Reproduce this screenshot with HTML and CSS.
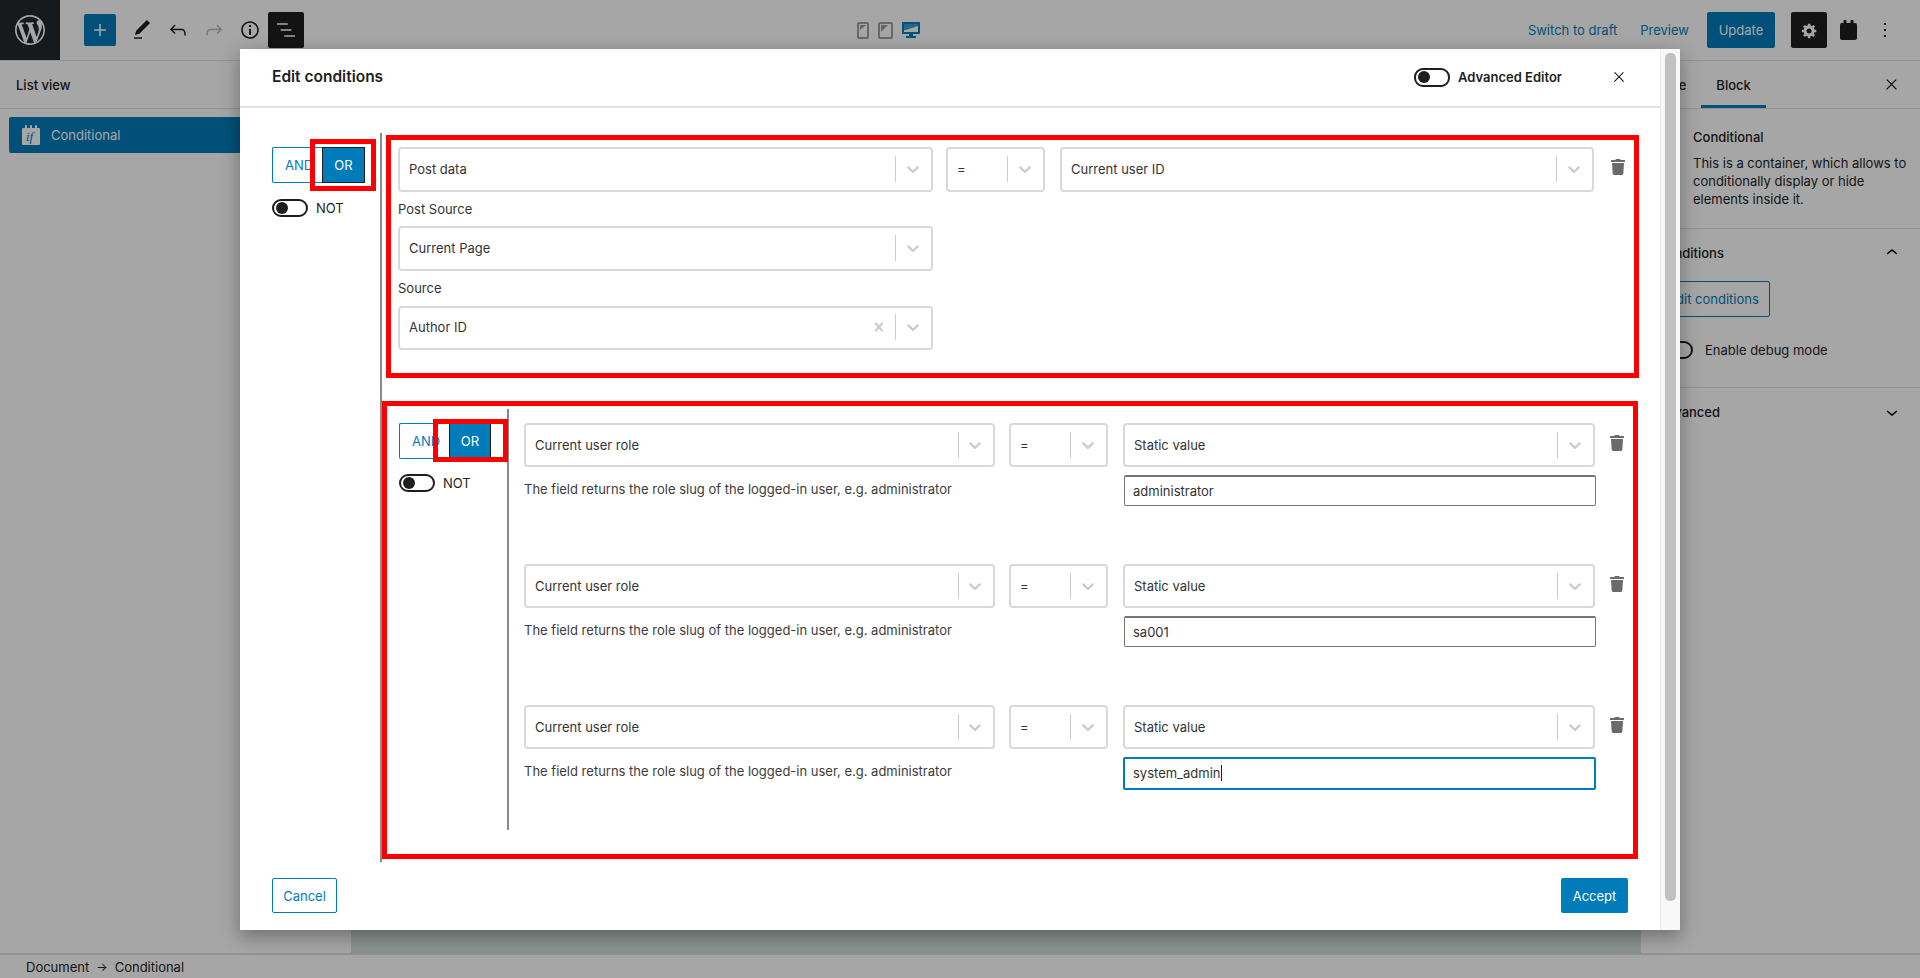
FILE: index.html
```html
<!DOCTYPE html>
<html lang="en">

<head>
    <meta charset="UTF-8" />
    <title>Edit conditions</title>
    <link rel="stylesheet" href="styles.css">
</head>

<body>

    <svg class="sprites" width="0" height="0">
        <symbol id="i-chevron" viewBox="0 0 20 20"><path d="M4.516 7.548c0.436-0.446 1.043-0.481 1.576 0l3.908 3.747 3.908-3.747c0.533-0.481 1.141-0.446 1.574 0 0.436 0.445 0.408 1.197 0 1.615-0.406 0.418-4.695 4.502-4.695 4.502-0.217 0.223-0.502 0.335-0.787 0.335s-0.57-0.112-0.789-0.335c0 0-4.287-4.084-4.695-4.502s-0.436-1.17 0-1.615z"/></symbol>
        <symbol id="i-clear" viewBox="0 0 20 20"><path d="M14.348 14.849c-0.469 0.469-1.229 0.469-1.697 0l-2.651-3.030-2.651 3.029c-0.469 0.469-1.229 0.469-1.697 0-0.469-0.469-0.469-1.229 0-1.697l2.758-3.15-2.759-3.152c-0.469-0.469-0.469-1.228 0-1.697s1.228-0.469 1.697 0l2.652 3.031 2.651-3.031c0.469-0.469 1.228-0.469 1.697 0s0.469 1.229 0 1.697l-2.758 3.152 2.758 3.15c0.469 0.469 0.469 1.229 0 1.698z"/></symbol>
        <symbol id="i-trash" viewBox="0 0 448 512"><path d="M432 32H312l-9.4-18.7A24 24 0 0 0 281.1 0H166.8a23.72 23.72 0 0 0-21.4 13.3L136 32H16A16 16 0 0 0 0 48v32a16 16 0 0 0 16 16h416a16 16 0 0 0 16-16V48a16 16 0 0 0-16-16zM53.2 467a48 48 0 0 0 47.9 45h245.8a48 48 0 0 0 47.9-45L416 128H32z"/></symbol>
        <symbol id="i-close" viewBox="0 0 24 24"><path d="M13 11.8l6.1-6.3-1-1-6.1 6.2-6.1-6.2-1 1 6.1 6.3-6.5 6.7 1 1 6.5-6.6 6.5 6.6 1-1z"/></symbol>
    </svg>

    <div class="editor">
        <header class="topbar">
            <div class="wp-logo">
                <svg width="36" height="36" viewBox="-2 -2 24 24"><path d="M20 10c0-5.51-4.49-10-10-10C4.48 0 0 4.49 0 10c0 5.52 4.48 10 10 10 5.51 0 10-4.48 10-10zM7.78 15.37L4.37 6.22c.55-.02 1.17-.08 1.17-.08.5-.06.44-1.13-.06-1.11 0 0-1.45.11-2.37.11-.18 0-.37 0-.58-.01C4.12 2.69 6.87 1.11 10 1.11c2.33 0 4.45.87 6.05 2.34-.68-.11-1.65.39-1.65 1.58 0 .74.45 1.36.9 2.1.35.61.55 1.36.55 2.46 0 1.49-1.4 5-1.4 5l-3.03-8.37c.54-.02.82-.17.82-.17.5-.05.44-1.25-.06-1.22 0 0-1.44.12-2.38.12-.87 0-2.33-.12-2.33-.12-.5-.03-.56 1.2-.06 1.22l.92.08 1.26 3.41zM17.41 10c.24-.64.74-1.87.43-4.25.7 1.29 1.05 2.71 1.05 4.25 0 3.29-1.73 6.24-4.4 7.78.97-2.59 1.94-5.2 2.92-7.78zM6.1 18.09C3.12 16.65 1.11 13.53 1.11 10c0-1.3.23-2.48.72-3.59C3.25 10.3 4.67 14.2 6.1 18.09zm4.03-6.63l2.58 6.98c-.86.29-1.76.45-2.71.45-.79 0-1.57-.11-2.29-.33.81-2.38 1.62-4.74 2.42-7.1z"/></svg>
            </div>
            <button class="add-btn">
                <svg width="24" height="24" viewBox="0 0 24 24"><path d="M18 11.2h-5.2V6h-1.6v5.2H6v1.6h5.2V18h1.6v-5.2H18z"/></svg>
            </button>
            <div class="tools">
                <button class="tool"><svg width="24" height="24" viewBox="0 0 24 24"><path d="M20.1 5.1L16.9 2 6.2 12.7l-1.3 4.4 4.5-1.3L20.1 5.1zM4 20.8h8v-1.5H4v1.5z"/></svg></button>
                <button class="tool"><svg width="24" height="24" viewBox="0 0 24 24"><path d="M18.3 11.7c-.6-.6-1.4-.9-2.3-.9H6.7l2.9-3.3-1.1-1-4.5 5L8.5 16l1-1-2.7-2.7H16c.5 0 .9.2 1.3.5 1 1 1 3.4 1 4.5v.3h1.5v-.2c0-1.5 0-4.3-1.5-5.7z"/></svg></button>
                <button class="tool tool-off"><svg width="24" height="24" viewBox="0 0 24 24"><path d="M15.6 6.5l-1.1 1 2.9 3.3H8c-.9 0-1.7.3-2.3.9-1.4 1.5-1.4 4.2-1.4 5.6v.2h1.5v-.3c0-1.1 0-3.5 1-4.5.3-.3.7-.5 1.3-.5h9.2L14.5 15l1.1 1.1 4.6-4.6-4.6-5z"/></svg></button>
                <button class="tool"><svg width="24" height="24" viewBox="0 0 24 24"><path d="M12 3.2c-4.8 0-8.8 3.9-8.8 8.8 0 4.8 3.9 8.8 8.8 8.8 4.8 0 8.8-3.9 8.8-8.8 0-4.8-4-8.8-8.8-8.8zm0 16c-4 0-7.2-3.3-7.2-7.2C4.8 8 8 4.8 12 4.8s7.2 3.3 7.2 7.2c0 4-3.2 7.2-7.2 7.2zM11 17h2v-6h-2v6zm0-8h2V7h-2v2z"/></svg></button>
                <button class="tool tool-on"><svg width="24" height="24" viewBox="0 0 24 24"><path d="M13.8 5.2H3v1.5h10.8V5.2zm-3.6 12v1.5H21v-1.5H10.2zm7.2-6H6.6v1.5h10.8v-1.5z"/></svg></button>
            </div>
            <div class="devices">
                <svg width="12" height="17" viewBox="0 0 12 17"><rect x="1" y="1" width="10" height="15" rx="1" fill="none" stroke="#9ba0a5" stroke-width="2"/><path d="M3 3h6l-6 5z" fill="#9ba0a5"/></svg>
                <svg width="15" height="17" viewBox="0 0 15 17"><rect x="1" y="1" width="13" height="15" rx="1" fill="none" stroke="#9ba0a5" stroke-width="2"/><path d="M3 3h7l-7 7z" fill="#9ba0a5"/></svg>
                <svg class="device-on" width="18" height="17" viewBox="0 0 18 17"><path d="M1 0h16a1 1 0 0 1 1 1v10a1 1 0 0 1-1 1h-6v2h3v2H4v-2h3v-2H1a1 1 0 0 1-1-1V1a1 1 0 0 1 1-1zm1 2v8h14V2z" fill="#007cba"/><path d="M2 2h14v2L4 8H2z" fill="#007cba" opacity=".75"/></svg>
            </div>
            <div class="publish">
                <a class="link switch-draft">Switch to draft</a>
                <a class="link">Preview</a>
                <button class="update-btn">Update</button>
                <button class="tool tool-on settings-btn"><svg width="17" height="17" viewBox="0 0 20 20"><path d="M18 12h-2.18c-.17.7-.44 1.35-.81 1.93l1.54 1.54-2.1 2.1-1.54-1.54c-.58.36-1.23.63-1.91.79V19H8v-2.18c-.68-.16-1.33-.43-1.91-.79l-1.54 1.54-2.12-2.12 1.54-1.54c-.36-.58-.63-1.23-.79-1.91H1V9.03h2.17c.16-.7.44-1.35.8-1.94L2.43 5.55l2.1-2.1 1.54 1.54c.58-.37 1.24-.64 1.93-.81V2h3v2.18c.68.16 1.33.43 1.91.79l1.54-1.54 2.12 2.12-1.54 1.54c.36.59.64 1.24.8 1.94H18V12zm-8.5 1.5c1.66 0 3-1.34 3-3s-1.34-3-3-3-3 1.34-3 3 1.34 3 3 3z"/></svg></button>
                <svg class="plugin-icon" width="17" height="20" viewBox="0 0 17 20"><path d="M3.5 1a1 1 0 0 1 1-1h1a1 1 0 0 1 1 1v2h4V1a1 1 0 0 1 1-1h1a1 1 0 0 1 1 1v2H15a2 2 0 0 1 2 2v13a2 2 0 0 1-2 2H2a2 2 0 0 1-2-2V5a2 2 0 0 1 2-2h1.5z"/></svg>
                <svg class="more-icon" width="24" height="24" viewBox="0 0 24 24"><path d="M13 19h-2v-2h2v2zm0-6h-2v-2h2v2zm0-6h-2V5h2v2z"/></svg>
            </div>
        </header>

        <div class="workspace">
            <aside class="list-panel">
                <div class="list-title">List view</div>
                <div class="list-row">
                    <svg width="18" height="20" viewBox="0 0 18 20"><path d="M1 3h2V1a1 1 0 0 1 2 0v2h3V1a1 1 0 0 1 2 0v2h3V1a1 1 0 0 1 2 0v2h2a1 1 0 0 1 1 1v15a1 1 0 0 1-1 1H1a1 1 0 0 1-1-1V4a1 1 0 0 1 1-1z" fill="#fff"/><text x="4" y="16" class="if-mark">if</text></svg>
                    <span>Conditional</span>
                </div>
            </aside>
            <main class="canvas"></main>
            <aside class="side-panel">
                <div class="tabs">
                    <span class="tab">Page</span>
                    <span class="tab tab-on">Block</span>
                    <svg class="tabs-close" width="17" height="17"><use href="#i-close"/></svg>
                </div>
                <section class="block-card">
                    <h3>Conditional</h3>
                    <p>This is a container, which allows to conditionally display or hide elements inside it.</p>
                </section>
                <section class="panel-body">
                    <div class="panel-head">
                        <span>Conditions</span>
                        <svg width="24" height="24" viewBox="0 0 24 24"><path d="M6.5 12.4L12 8l5.5 4.4-.9 1.2L12 10l-4.5 3.6-1-1.2z"/></svg>
                    </div>
                    <button class="edit-btn">Edit conditions</button>
                    <div class="debug-row">
                        <span class="toggle"></span>
                        <span>Enable debug mode</span>
                    </div>
                </section>
                <section class="panel-closed">
                    <span>Advanced</span>
                    <svg width="24" height="24" viewBox="0 0 24 24"><path d="M17.5 11.6L12 16l-5.5-4.4.9-1.2L12 14l4.5-3.6 1 1.2z"/></svg>
                </section>
            </aside>
        </div>

        <footer class="statusbar">
            <span>Document</span>
            <span class="crumb-arrow">→</span>
            <span>Conditional</span>
        </footer>
    </div>

    <div class="overlay"></div>

    <div class="modal">
        <div class="modal-main">
            <div class="modal-head">
                <h2>Edit conditions</h2>
                <div class="adv-editor">
                    <span class="toggle toggle-big"></span>
                    <span>Advanced Editor</span>
                </div>
                <svg class="modal-close" width="16" height="16"><use href="#i-close"/></svg>
            </div>

            <div class="group">
                <div class="logic">
                    <div class="and-or">
                        <button class="logic-btn">AND</button>
                        <button class="logic-btn logic-on">OR</button>
                        <span class="mark mark-outer"></span>
                    </div>
                    <div class="not-row"><span class="toggle"></span><span>NOT</span></div>
                </div>

                <div class="rules">
                    <div class="box box-first">
                        <div class="rule-line">
                            <div class="select sel-a"><span>Post data</span><i class="sep"></i><svg class="chev" width="20" height="20"><use href="#i-chevron"/></svg></div>
                            <div class="select sel-op"><span>=</span><i class="sep"></i><svg class="chev" width="20" height="20"><use href="#i-chevron"/></svg></div>
                            <div class="select sel-c"><span>Current user ID</span><i class="sep"></i><svg class="chev" width="20" height="20"><use href="#i-chevron"/></svg></div>
                            <svg class="trash" width="14" height="16"><use href="#i-trash"/></svg>
                        </div>
                        <div class="field-label">Post Source</div>
                        <div class="select sel-a"><span>Current Page</span><i class="sep"></i><svg class="chev" width="20" height="20"><use href="#i-chevron"/></svg></div>
                        <div class="field-label">Source</div>
                        <div class="select sel-a sel-short"><span>Author ID</span><svg class="clear" width="18" height="18"><use href="#i-clear"/></svg><i class="sep"></i><svg class="chev" width="20" height="20"><use href="#i-chevron"/></svg></div>
                    </div>

                    <div class="box box-second">
                        <div class="group group-inner">
                            <div class="logic logic-inner">
                                <div class="and-or">
                                    <button class="logic-btn">AND</button>
                                    <button class="logic-btn logic-on">OR</button>
                                    <span class="mark mark-inner"></span>
                                </div>
                                <div class="not-row"><span class="toggle"></span><span>NOT</span></div>
                            </div>

                            <div class="rules-inner">
                                <div class="role-rule">
                                    <div class="role-left">
                                        <div class="select sel-role"><span>Current user role</span><i class="sep"></i><svg class="chev" width="20" height="20"><use href="#i-chevron"/></svg></div>
                                        <div class="help">The field returns the role slug of the logged-in user, e.g. administrator</div>
                                    </div>
                                    <div class="select sel-op"><span>=</span><i class="sep"></i><svg class="chev" width="20" height="20"><use href="#i-chevron"/></svg></div>
                                    <div class="role-right">
                                        <div class="select sel-static"><span>Static value</span><i class="sep"></i><svg class="chev" width="20" height="20"><use href="#i-chevron"/></svg></div>
                                        <div class="input">administrator</div>
                                    </div>
                                    <svg class="trash" width="14" height="16"><use href="#i-trash"/></svg>
                                </div>
                                <div class="role-rule">
                                    <div class="role-left">
                                        <div class="select sel-role"><span>Current user role</span><i class="sep"></i><svg class="chev" width="20" height="20"><use href="#i-chevron"/></svg></div>
                                        <div class="help">The field returns the role slug of the logged-in user, e.g. administrator</div>
                                    </div>
                                    <div class="select sel-op"><span>=</span><i class="sep"></i><svg class="chev" width="20" height="20"><use href="#i-chevron"/></svg></div>
                                    <div class="role-right">
                                        <div class="select sel-static"><span>Static value</span><i class="sep"></i><svg class="chev" width="20" height="20"><use href="#i-chevron"/></svg></div>
                                        <div class="input">sa001</div>
                                    </div>
                                    <svg class="trash" width="14" height="16"><use href="#i-trash"/></svg>
                                </div>
                                <div class="role-rule">
                                    <div class="role-left">
                                        <div class="select sel-role"><span>Current user role</span><i class="sep"></i><svg class="chev" width="20" height="20"><use href="#i-chevron"/></svg></div>
                                        <div class="help">The field returns the role slug of the logged-in user, e.g. administrator</div>
                                    </div>
                                    <div class="select sel-op"><span>=</span><i class="sep"></i><svg class="chev" width="20" height="20"><use href="#i-chevron"/></svg></div>
                                    <div class="role-right">
                                        <div class="select sel-static"><span>Static value</span><i class="sep"></i><svg class="chev" width="20" height="20"><use href="#i-chevron"/></svg></div>
                                        <div class="input input-focus">system_admin<i class="caret"></i></div>
                                    </div>
                                    <svg class="trash" width="14" height="16"><use href="#i-trash"/></svg>
                                </div>
                            </div>
                        </div>
                    </div>
                </div>
            </div>

            <div class="modal-foot">
                <button class="cancel-btn">Cancel</button>
                <button class="accept-btn">Accept</button>
            </div>
        </div>
        <div class="scroll-track"><div class="scroll-thumb"></div></div>
    </div>

</body>

</html>
```

FILE: styles.css
```css
html,
body {
    margin: 0;
    padding: 0;
    height: 100%;
}

body {
    font-family: Inter, "Liberation Sans", sans-serif;
    font-size: 13px;
    color: #1e1e1e;
    background: #fff;
    position: relative;
    overflow: hidden;
}

button {
    font: inherit;
    border: none;
    background: none;
    padding: 0;
    cursor: pointer;
}

h2,
h3,
p {
    margin: 0;
}

.sprites {
    position: absolute;
}

.editor {
    display: flex;
    flex-direction: column;
    height: 978px;
}

/* top toolbar */
.topbar {
    height: 60px;
    flex-shrink: 0;
    display: flex;
    align-items: center;
    border-bottom: 1px solid #e0e0e0;
}

.wp-logo {
    width: 60px;
    height: 60px;
    background: #23282d;
    display: flex;
    align-items: center;
    justify-content: center;
    fill: #fff;
}

.add-btn {
    width: 32px;
    height: 32px;
    margin: 0 8px 0 24px;
    background: #007cba;
    border-radius: 2px;
    fill: #fff;
    display: flex;
    align-items: center;
    justify-content: center;
}

.tools {
    display: flex;
}

.tool {
    width: 36px;
    height: 36px;
    border-radius: 2px;
    display: flex;
    align-items: center;
    justify-content: center;
    fill: #1e1e1e;
}

.tool-off {
    fill: #b8b8b8;
}

.tool-on {
    background: #1e1e1e;
    fill: #fff;
}

.devices {
    display: flex;
    align-items: center;
    gap: 9px;
    margin-left: 553px;
}

.publish {
    margin-left: auto;
    display: flex;
    align-items: center;
    padding-right: 23px;
}

.link {
    color: #007cba;
}

.switch-draft {
    margin-right: 23px;
}

.update-btn {
    width: 68px;
    height: 36px;
    margin-left: 18px;
    background: #007cba;
    color: #fff;
    border-radius: 2px;
}

.settings-btn {
    margin-left: 16px;
}

.plugin-icon {
    margin-left: 13px;
    fill: #1e1e1e;
}

.more-icon {
    margin-left: 16px;
    fill: #1e1e1e;
}

.workspace {
    flex: 1;
    display: flex;
    min-height: 0;
}

/* list view */
.list-panel {
    width: 351px;
    flex-shrink: 0;
}

.list-title {
    height: 47px;
    line-height: 48px;
    padding-left: 16px;
    font-weight: 500;
    border-bottom: 1px solid #e0e0e0;
}

.list-row {
    height: 36px;
    margin: 8px 0 0 9px;
    background: #007cba;
    color: #fff;
    border-radius: 2px;
    display: flex;
    align-items: center;
    gap: 11px;
    padding-left: 13px;
}

.if-mark {
    font-family: "Liberation Serif", serif;
    font-style: italic;
    font-size: 13px;
    fill: #007cba;
}

.canvas {
    flex: 1;
    background: #d5e2de;
}

/* block settings */
.side-panel {
    width: 280px;
    flex-shrink: 0;
    box-sizing: border-box;
    background: #fff;
    border-left: 1px solid #e0e0e0;
}

.tabs {
    height: 47px;
    display: flex;
    align-items: stretch;
    border-bottom: 1px solid #e0e0e0;
    position: relative;
    margin-left: -1px;
    font-weight: 500;
}

.tab {
    padding: 0 15px;
    line-height: 48px;
}

.tab-on {
    box-shadow: inset 0 -3px 0 #007cba;
}

.tabs-close {
    position: absolute;
    right: 20px;
    top: 15px;
}

.block-card {
    height: 120px;
    box-sizing: border-box;
    padding: 19px 8px 0 52px;
    border-bottom: 1px solid #e0e0e0;
    line-height: 18px;
}

.block-card h3 {
    font-size: 13px;
    font-weight: 500;
    margin-bottom: 8px;
}

.panel-body {
    height: 159px;
    box-sizing: border-box;
    padding: 0 16px;
    border-bottom: 1px solid #e0e0e0;
}

.panel-head,
.panel-closed {
    display: flex;
    align-items: center;
    justify-content: space-between;
    font-weight: 500;
}

.panel-head {
    height: 48px;
}

.panel-closed {
    height: 48px;
    padding: 0 16px;
}

.edit-btn {
    display: block;
    width: 113px;
    height: 36px;
    margin-top: 4px;
    border: 1px solid #007cba;
    border-radius: 2px;
    color: #007cba;
}

.debug-row {
    display: flex;
    align-items: center;
    gap: 12px;
    margin-top: 24px;
}

.statusbar {
    height: 25px;
    flex-shrink: 0;
    box-sizing: border-box;
    border-top: 2px solid #e0e0e0;
    padding-left: 26px;
    display: flex;
    align-items: center;
    gap: 7px;
}

.crumb-arrow {
    font-size: 12px;
}

.overlay {
    position: absolute;
    inset: 0;
    background: rgba(0, 0, 0, 0.35);
}

/* modal */
.modal {
    position: absolute;
    left: 240px;
    top: 49px;
    width: 1440px;
    height: 881px;
    background: #fff;
    box-shadow: 0 6px 18px rgba(0, 0, 0, 0.35);
    display: flex;
}

.modal-main {
    width: 1420px;
    flex-shrink: 0;
    box-sizing: border-box;
}

.modal-head {
    height: 59px;
    box-sizing: border-box;
    padding: 0 33px 1px 32px;
    border-bottom: 2px solid #e2e2e2;
    display: flex;
    align-items: center;
}

.modal-head h2 {
    font-size: 15.5px;
    font-weight: 600;
    margin-bottom: 2px;
}

.adv-editor {
    margin-left: auto;
    display: flex;
    align-items: center;
    gap: 8px;
    font-weight: 600;
}

.modal-close {
    margin-left: 49px;
}

.toggle {
    display: inline-block;
    width: 36px;
    height: 18px;
    box-sizing: border-box;
    border: 2px solid #1e1e1e;
    border-radius: 9px;
    position: relative;
    flex-shrink: 0;
    background: #fff;
}

.toggle::after {
    content: "";
    position: absolute;
    left: 2px;
    top: 1px;
    width: 12px;
    height: 12px;
    border-radius: 50%;
    background: #1e1e1e;
}

.toggle-big {
    height: 19px;
}

.group {
    display: flex;
    margin-top: 25px;
    padding-left: 32px;
}

.logic {
    width: 108px;
    flex-shrink: 0;
    padding-top: 14px;
}

.and-or {
    display: flex;
    position: relative;
}

.logic-btn {
    width: 50px;
    height: 36px;
    box-sizing: border-box;
    border: 1px solid #007cba;
    border-right: none;
    border-radius: 2px 0 0 2px;
    color: #007cba;
    background: #fff;
    text-align: left;
    padding-left: 12px;
    overflow: hidden;
}

.logic-on {
    width: 43px;
    border: 1px solid #1e1e1e;
    border-radius: 0;
    background: #007cba;
    color: #fff;
    text-align: center;
    padding: 0;
}

/* annotation frames drawn over the screenshot */
.mark {
    position: absolute;
    box-sizing: border-box;
    border: 5px solid #f00;
    pointer-events: none;
}

.mark-outer {
    left: 38px;
    top: -8px;
    width: 66px;
    height: 52px;
}

.mark-inner {
    left: 34px;
    top: -4px;
    width: 75px;
    height: 43px;
}

.not-row {
    display: flex;
    align-items: center;
    gap: 8px;
    margin-top: 16px;
}

.rules {
    width: 1258px;
    box-sizing: border-box;
    height: 729px;
    padding-top: 2px;
    border-left: 2px solid #8a8a8a;
}

.box {
    border: 5px solid #f00;
    box-sizing: border-box;
}

.box-first {
    width: 1253px;
    height: 243px;
    margin-left: 4px;
    padding: 7px 0 0 7px;
}

.box-first .select {
    padding-bottom: 2px;
}

.box-second {
    width: 1256px;
    height: 458px;
    margin-top: 23px;
}

.rule-line {
    display: flex;
    align-items: flex-start;
}

.select {
    display: flex;
    align-items: center;
    height: 45px;
    box-sizing: border-box;
    border: 2px solid #d9d9d9;
    border-radius: 4px;
    padding-left: 9px;
    color: #333;
    background: #fff;
    flex-shrink: 0;
}

.select span {
    margin-right: auto;
}

.sep {
    width: 1px;
    height: 26px;
    background: #ccc;
}

.chev {
    fill: #ccc;
    margin: 0 8px 0 7px;
}

.clear {
    fill: #ccc;
    margin-right: 7px;
}

.sel-a {
    width: 535px;
}

.sel-short {
    height: 44px;
    margin-top: 9px;
}

.sel-op {
    width: 99px;
    margin-left: 14px;
}

.rule-line .sel-op {
    margin-left: 13px;
}

.sel-c {
    width: 534px;
    margin-left: 15px;
}

.sel-role {
    width: 471px;
    height: 44px;
}

.sel-role .chev {
    margin-left: 6px;
}

.sel-static {
    width: 472px;
    height: 44px;
}

.role-rule .sel-op {
    height: 44px;
}

.trash {
    fill: #6a6a6a;
    margin: 12px 0 0 17px;
    flex-shrink: 0;
}

.field-label {
    line-height: 18px;
    margin: 8px 0;
    color: #333;
}

.group-inner {
    margin-top: 3px;
    padding-left: 12px;
}

.logic-inner {
    width: 108px;
}

.logic-inner .logic-on {
    width: 42px;
}

.logic-inner .not-row {
    margin-top: 15px;
}

.rules-inner {
    flex: 1;
    height: 421px;
    box-sizing: border-box;
    padding: 14px 0 0 15px;
    border-left: 2px solid #8a8a8a;
}

.role-rule {
    display: flex;
    align-items: flex-start;
    height: 141px;
}

.role-rule:last-child {
    height: 125px;
}

.role-left {
    width: 471px;
    flex-shrink: 0;
}

.role-right {
    margin-left: 15px;
    width: 473px;
    flex-shrink: 0;
}

.role-right + .trash {
    margin-left: 14px;
}

.help {
    margin-top: 13px;
    line-height: 18px;
    color: #3c3c3c;
}

.input {
    margin: 8px 0 0 1px;
    height: 31px;
    line-height: 29px;
    box-sizing: border-box;
    border: 1px solid #757575;
    border-top-width: 2px;
    border-radius: 2px;
    padding-left: 8px;
    color: #333;
}

.input-focus {
    margin-left: 0;
    width: 473px;
    height: 33px;
    border: 2px solid #007cba;
    line-height: 29px;
    padding-left: 8px;
}

.caret {
    display: inline-block;
    width: 1px;
    height: 16px;
    background: #1e1e1e;
    vertical-align: -3px;
}

.modal-foot {
    display: flex;
    justify-content: space-between;
    margin-top: 16px;
    padding: 0 32px;
}

.cancel-btn,
.accept-btn {
    height: 35px;
    border-radius: 2px;
}

.cancel-btn {
    width: 65px;
    border: 1px solid #007cba;
    color: #007cba;
}

.accept-btn {
    width: 67px;
    background: #007cba;
    color: #fff;
}

.scroll-track {
    width: 20px;
    box-sizing: border-box;
    background: #f8f8f8;
    border-left: 1px solid #ececec;
    padding: 4px 4px 0 4px;
}

.scroll-thumb {
    height: 848px;
    background: #c1c1c1;
    border-radius: 5px;
}
```
